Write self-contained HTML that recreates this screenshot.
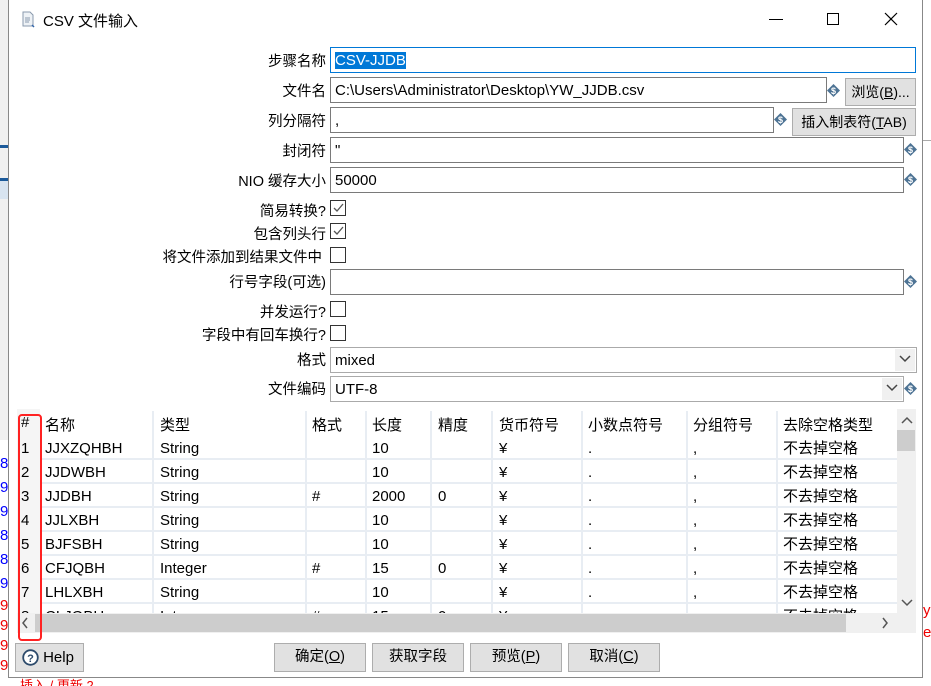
<!DOCTYPE html>
<html><head><meta charset="utf-8"><style>
*{margin:0;padding:0;box-sizing:border-box}
html,body{width:931px;height:686px;overflow:hidden}
body{background:#fff;font-family:"Liberation Sans","Noto Sans CJK SC",sans-serif;font-size:15px;color:#000;position:relative}
.a{position:absolute}
.dlg{left:8px;top:0;width:915px;height:678px;background:#fff;border:1px solid #888;border-top:none}
.lbl{position:absolute;right:605px;text-align:right;white-space:nowrap;font-size:14.5px}
.inp{position:absolute;border:1px solid #7a7a7a;background:#fff;padding-left:4px;line-height:25px;white-space:nowrap;font-size:15px}
.cb{position:absolute;left:330px;width:16px;height:16px;border:1px solid #333;background:#fff}
.cb svg{position:absolute;left:1px;top:1px}
.btn{position:absolute;background:#e1e1e1;border:1px solid #adadad;text-align:center;font-size:14.5px;line-height:27px}
.dol{position:absolute;width:13px;height:13px}
.cell{position:absolute;white-space:nowrap;font-size:15px}
.col{position:absolute;white-space:nowrap}
</style></head><body>
<div class="a" style="left:0;top:0;width:8px;height:686px;background:#f0f0f0"></div>
<div class="a" style="left:0;top:145px;width:8px;height:3px;background:#1c5a9a"></div>
<div class="a" style="left:0;top:178px;width:8px;height:3px;background:#1c5a9a"></div>
<div class="a" style="left:0;top:181px;width:8px;height:18px;background:#d8e4f0"></div>
<div class="a" style="left:0;top:440px;width:8px;height:246px;background:#fff"></div>
<div class="a" style="left:0;top:452px;color:#00f;font-size:15px;line-height:24px;width:8px;overflow:hidden">8<br>9<br>9<br>8<br>8<br>9</div>
<div class="a" style="left:0;top:596px;color:#e00;font-size:15px;line-height:20px;width:8px;height:90px;overflow:hidden">9<br>9<br>9<br>9</div>
<div class="a" style="left:20px;top:678px;width:200px;height:8px;overflow:hidden;color:#e00;font-size:13px;line-height:16px">插入 / 更新 2</div>
<div class="a" style="left:923px;top:600px;color:#e00;font-size:15px;line-height:22px">y<br>e</div>
<div class="a" style="left:923px;top:140px;width:8px;height:1px;background:#aaa"></div>
<div class="dlg a"></div>
<svg class="a" style="left:22px;top:11px" width="14" height="17" viewBox="0 0 14 17"><path d="M1 1h7l3 3v11H1z" fill="#eef2f6" stroke="#8a9aad"/><path d="M3 7h5M3 9h5M3 11h4" stroke="#8a9aad"/><path d="M10 14l2 2" stroke="#36a" stroke-width="1.5"/></svg>
<div class="a" style="left:43px;top:10px;font-size:15px">CSV 文件输入</div>
<div class="a" style="left:769px;top:19px;width:14px;height:1px;background:#000"></div>
<div class="a" style="left:827px;top:13px;width:12px;height:12px;border:1px solid #000"></div>
<svg class="a" style="left:884px;top:12px" width="14" height="14"><path d="M1 1L13 13M13 1L1 13" stroke="#000" stroke-width="1.2"/></svg>
<div class="lbl" style="top:50px">步骤名称</div>
<div class="lbl" style="top:80px">文件名</div>
<div class="lbl" style="top:110px">列分隔符</div>
<div class="lbl" style="top:140px">封闭符</div>
<div class="lbl" style="top:170px">NIO 缓存大小</div>
<div class="lbl" style="top:200px">简易转换?</div>
<div class="lbl" style="top:223px">包含列头行</div>
<div class="lbl" style="top:246px;right:609px">将文件添加到结果文件中</div>
<div class="lbl" style="top:271px">行号字段(可选)</div>
<div class="lbl" style="top:301px">并发运行?</div>
<div class="lbl" style="top:324px">字段中有回车换行?</div>
<div class="lbl" style="top:349px">格式</div>
<div class="lbl" style="top:378px">文件编码</div>
<div class="inp" style="left:330px;top:47px;width:586px;height:26px;border-color:#0078d7"><span style="background:#0078d7;color:#fff">CSV-JJDB</span></div>
<div class="inp" style="left:330px;top:77px;width:497px;height:26px">C:\Users\Administrator\Desktop\YW_JJDB.csv</div>
<div class="inp" style="left:330px;top:107px;width:444px;height:26px">,</div>
<div class="inp" style="left:330px;top:137px;width:574px;height:26px">"</div>
<div class="inp" style="left:330px;top:167px;width:574px;height:26px">50000</div>
<div class="inp" style="left:330px;top:269px;width:574px;height:26px"></div>
<div class="inp" style="left:330px;top:347px;width:587px;height:26px;border-color:#aaa">mixed</div>
<div class="a" style="left:895px;top:349px;width:20px;height:22px;background:#f0f0f0"></div>
<svg class="a" style="left:899px;top:355px" width="12" height="8"><path d="M1 1l5 5 5-5" fill="none" stroke="#444" stroke-width="1.5"/></svg>
<div class="inp" style="left:330px;top:376px;width:574px;height:26px;border-color:#aaa">UTF-8</div>
<div class="a" style="left:882px;top:378px;width:20px;height:22px;background:#f0f0f0"></div>
<svg class="a" style="left:886px;top:384px" width="12" height="8"><path d="M1 1l5 5 5-5" fill="none" stroke="#444" stroke-width="1.5"/></svg>
<svg width="0" height="0" style="position:absolute"><defs><symbol id="d" viewBox="0 0 13 13"><path d="M6.5 0L13 6.5 6.5 13 0 6.5z" fill="#4d7394"/><text x="6.5" y="10" font-size="9" text-anchor="middle" fill="#fff" font-family="Liberation Sans" font-weight="bold">$</text></symbol></defs></svg>
<svg class="dol" style="left:827px;top:84px"><use href="#d"/></svg>
<svg class="dol" style="left:774px;top:113px"><use href="#d"/></svg>
<svg class="dol" style="left:904px;top:143px"><use href="#d"/></svg>
<svg class="dol" style="left:904px;top:173px"><use href="#d"/></svg>
<svg class="dol" style="left:904px;top:275px"><use href="#d"/></svg>
<svg class="dol" style="left:904px;top:382px"><use href="#d"/></svg>
<div class="btn" style="left:845px;top:78px;width:71px;height:28px;font-size:14px">浏览(<u>B</u>)...</div>
<div class="btn" style="left:792px;top:108px;width:124px;height:28px;font-size:14px">插入制表符(<u>T</u>AB)</div>
<div class="cb" style="top:200px"><svg width="13" height="13"><path d="M2 6l3 3 6-7" fill="none" stroke="#555" stroke-width="1.3"/></svg></div>
<div class="cb" style="top:223px"><svg width="13" height="13"><path d="M2 6l3 3 6-7" fill="none" stroke="#555" stroke-width="1.3"/></svg></div>
<div class="cb" style="top:247px"></div>
<div class="cb" style="top:301px"></div>
<div class="cb" style="top:325px"></div>
<div class="a" style="left:17px;top:409px;width:880px;height:204px;background:#fff;overflow:hidden">
<div class="a" style="left:0;top:0;width:23px;height:204px;background:#f5f5f5"></div>
<svg class="a" style="left:0;top:0" width="880" height="204">
<g stroke="#e8edf3" stroke-width="2">
<line x1="23" y1="50" x2="880" y2="50"/><line x1="23" y1="74" x2="880" y2="74"/><line x1="23" y1="98" x2="880" y2="98"/><line x1="23" y1="122" x2="880" y2="122"/><line x1="23" y1="146" x2="880" y2="146"/><line x1="23" y1="170" x2="880" y2="170"/><line x1="23" y1="194" x2="880" y2="194"/>
<line x1="136" y1="2" x2="136" y2="204"/><line x1="289" y1="2" x2="289" y2="204"/><line x1="349" y1="2" x2="349" y2="204"/><line x1="414" y1="2" x2="414" y2="204"/><line x1="475" y1="2" x2="475" y2="204"/><line x1="565" y1="2" x2="565" y2="204"/><line x1="670" y1="2" x2="670" y2="204"/><line x1="760" y1="2" x2="760" y2="204"/>
</g></svg>
<div class="cell" style="left:4px;top:5px">#</div>
<div class="cell" style="left:28px;top:5px">名称</div>
<div class="cell" style="left:143px;top:5px">类型</div>
<div class="cell" style="left:295px;top:5px">格式</div>
<div class="cell" style="left:355px;top:5px">长度</div>
<div class="cell" style="left:421px;top:5px">精度</div>
<div class="cell" style="left:482px;top:5px">货币符号</div>
<div class="cell" style="left:571px;top:5px">小数点符号</div>
<div class="cell" style="left:676px;top:5px">分组符号</div>
<div class="cell" style="left:766px;top:5px">去除空格类型</div>
<div class="a" style="left:0;top:28px;line-height:24px;width:880px">
<div class="col" style="left:4px">1<br>2<br>3<br>4<br>5<br>6<br>7<br>8</div>
<div class="col" style="left:28px">JJXZQHBH<br>JJDWBH<br>JJDBH<br>JJLXBH<br>BJFSBH<br>CFJQBH<br>LHLXBH<br>CLJQBH</div>
<div class="col" style="left:143px">String<br>String<br>String<br>String<br>String<br>Integer<br>String<br>Integer</div>
<div class="col" style="left:295px">&nbsp;<br>&nbsp;<br>#<br>&nbsp;<br>&nbsp;<br>#<br>&nbsp;<br>#</div>
<div class="col" style="left:355px">10<br>10<br>2000<br>10<br>10<br>15<br>10<br>15</div>
<div class="col" style="left:421px">&nbsp;<br>&nbsp;<br>0<br>&nbsp;<br>&nbsp;<br>0<br>&nbsp;<br>0</div>
<div class="col" style="left:482px">¥<br>¥<br>¥<br>¥<br>¥<br>¥<br>¥<br>¥</div>
<div class="col" style="left:571px">.<br>.<br>.<br>.<br>.<br>.<br>.<br>.</div>
<div class="col" style="left:676px">,<br>,<br>,<br>,<br>,<br>,<br>,<br>,</div>
<div class="col" style="left:766px">不去掉空格<br>不去掉空格<br>不去掉空格<br>不去掉空格<br>不去掉空格<br>不去掉空格<br>不去掉空格<br>不去掉空格</div>
</div>
</div>
<div class="a" style="left:897px;top:409px;width:19px;height:224px;background:#f0f0f0"></div>
<div class="a" style="left:897px;top:430px;width:18px;height:21px;background:#cdcdcd"></div>
<svg class="a" style="left:901px;top:416px" width="12" height="8"><path d="M1 7l5-5 5 5" fill="none" stroke="#555" stroke-width="1.5"/></svg>
<svg class="a" style="left:901px;top:599px" width="12" height="8"><path d="M1 1l5 5 5-5" fill="none" stroke="#555" stroke-width="1.5"/></svg>
<div class="a" style="left:17px;top:613px;width:880px;height:20px;background:#f0f0f0"></div>
<div class="a" style="left:35px;top:614px;width:811px;height:18px;background:#cdcdcd"></div>
<svg class="a" style="left:21px;top:617px" width="8" height="12"><path d="M6 1L2 6l4 5" fill="none" stroke="#555" stroke-width="1.5"/></svg>
<svg class="a" style="left:881px;top:617px" width="8" height="12"><path d="M2 1l4 5-4 5" fill="none" stroke="#555" stroke-width="1.5"/></svg>
<div class="a" style="left:18px;top:414px;width:24px;height:227px;border:2.5px solid #f22;border-radius:4px"></div>
<div class="btn" style="left:15px;top:643px;width:69px;height:29px;padding-left:18px;font-size:15px">Help</div>
<svg class="a" style="left:22px;top:649px" width="17" height="17"><circle cx="8.5" cy="8.5" r="7.3" fill="#fff" stroke="#2c4a6b" stroke-width="1.8"/><text x="8.5" y="13" font-size="11" text-anchor="middle" fill="#2c4a6b" font-family="Liberation Sans" font-weight="bold">?</text></svg>
<div class="btn" style="left:274px;top:643px;width:92px;height:29px">确定(<u>O</u>)</div>
<div class="btn" style="left:372px;top:643px;width:92px;height:29px">获取字段</div>
<div class="btn" style="left:470px;top:643px;width:92px;height:29px">预览(<u>P</u>)</div>
<div class="btn" style="left:568px;top:643px;width:92px;height:29px">取消(<u>C</u>)</div>
</body></html>
